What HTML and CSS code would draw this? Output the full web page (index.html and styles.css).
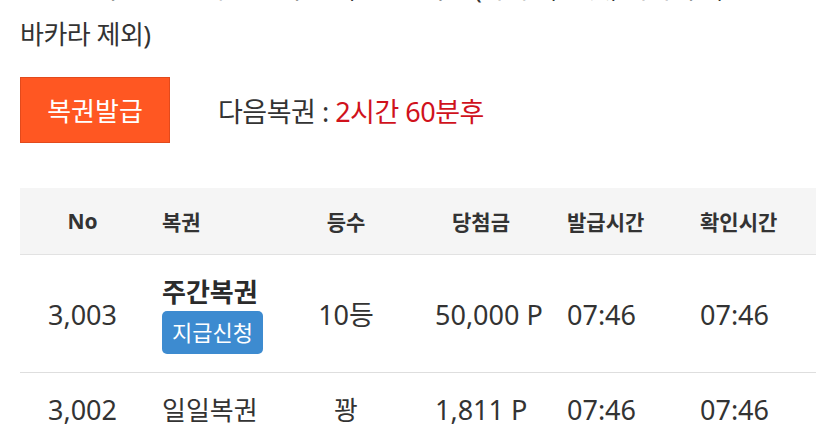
FILE: index.html
```html
<!DOCTYPE html>
<html lang="ko">
<head>
<meta charset="utf-8">
<title>복권</title>
<link rel="stylesheet" href="styles.css">
</head>
<body>
<div class="page">
  <p class="notice">※ 일일복권 전날 베팅 금액 100,000P 이상 (카지노, 슬롯, 미니게임,<br>바카라 제외)</p>

  <div class="issue">
    <button class="issue-btn" type="button">복권발급</button>
    <div class="next">다음복권 : <span class="next-time">2시간 60분후</span></div>
  </div>

  <div class="table">
    <div class="row head">
      <div class="c c-no">No</div>
      <div class="c c-name">복권</div>
      <div class="c c-rank">등수</div>
      <div class="c c-prize">당첨금</div>
      <div class="c c-time">발급시간</div>
      <div class="c c-check">확인시간</div>
    </div>
    <div class="row body big">
      <div class="c c-no num">3,003</div>
      <div class="c c-name stack">
        <span class="name-strong">주간복권</span>
        <span class="badge">지급신청</span>
      </div>
      <div class="c c-rank mix">10등</div>
      <div class="c c-prize num">50,000 P</div>
      <div class="c c-time num">07:46</div>
      <div class="c c-check num">07:46</div>
    </div>
    <div class="row body">
      <div class="c c-no num">3,002</div>
      <div class="c c-name ko">일일복권</div>
      <div class="c c-rank ko">꽝</div>
      <div class="c c-prize num">1,811 P</div>
      <div class="c c-time num">07:46</div>
      <div class="c c-check num">07:46</div>
    </div>
  </div>
</div>
</body>
</html>
```

FILE: styles.css
```css
* { box-sizing: border-box; }

html, body {
  margin: 0;
  padding: 0;
  background: #ffffff;
  overflow: hidden;
}

body {
  font-family: "Noto Sans", "Noto Sans CJK KR", sans-serif;
  color: #333333;
}

.page {
  padding: 0 19px 0 20px;
}

.notice {
  margin: -35px 0 0 0;
  font-size: 26px;
  line-height: 46px;
  letter-spacing: -0.5px;
  white-space: nowrap;
}

.issue {
  display: flex;
  align-items: center;
  gap: 48px;
  margin-top: 20px;
}

.issue-btn {
  width: 150px;
  height: 66px;
  background: #ff5722;
  border: 1px solid #e24a1c;
  color: #ffffff;
  font-family: inherit;
  font-size: 26px;
  padding: 0;
  letter-spacing: 0;
}

.next {
  font-size: 27px;
  color: #333333;
  letter-spacing: -0.5px;
}

.next-time {
  color: #d0121c;
}

.table {
  margin-top: 45px;
}

.row {
  display: grid;
  grid-template-columns: 125px 155px 92px 158px 133px 1fr;
  align-items: center;
}

.head {
  height: 67px;
  background: #f5f5f5;
  border-bottom: 1px solid #e2e2e2;
  font-weight: 700;
  font-size: 21px;
}

.body {
  border-bottom: 1px solid #dedede;
  padding: 19px 0;
  font-size: 27px;
}

.body.big {
  padding: 21px 0 18px;
}

.c {
  white-space: nowrap;
}

.c-no { text-align: center; }
.c-name { padding-left: 17px; }
.c-rank { text-align: center; }
.c-prize { padding-left: 43px; }
.head .c-prize { padding-left: 60px; }
.c-time { padding-left: 17px; }
.c-check { padding-left: 17px; }

.num {
  font-size: 27px;
  line-height: 36px;
}

.ko {
  font-size: 26px;
  line-height: 36px;
}

.mix {
  font-size: 27px;
  line-height: 36px;
}

.stack {
  display: flex;
  flex-direction: column;
  align-items: flex-start;
  gap: 3px;
}

.name-strong {
  font-weight: 700;
  font-size: 26px;
  line-height: 32px;
  color: #2b2b2b;
}

.badge {
  display: inline-block;
  background: #3d8bd0;
  color: #ffffff;
  font-size: 22px;
  line-height: 31px;
  padding: 6px 10px;
  border-radius: 5px;
}
```
